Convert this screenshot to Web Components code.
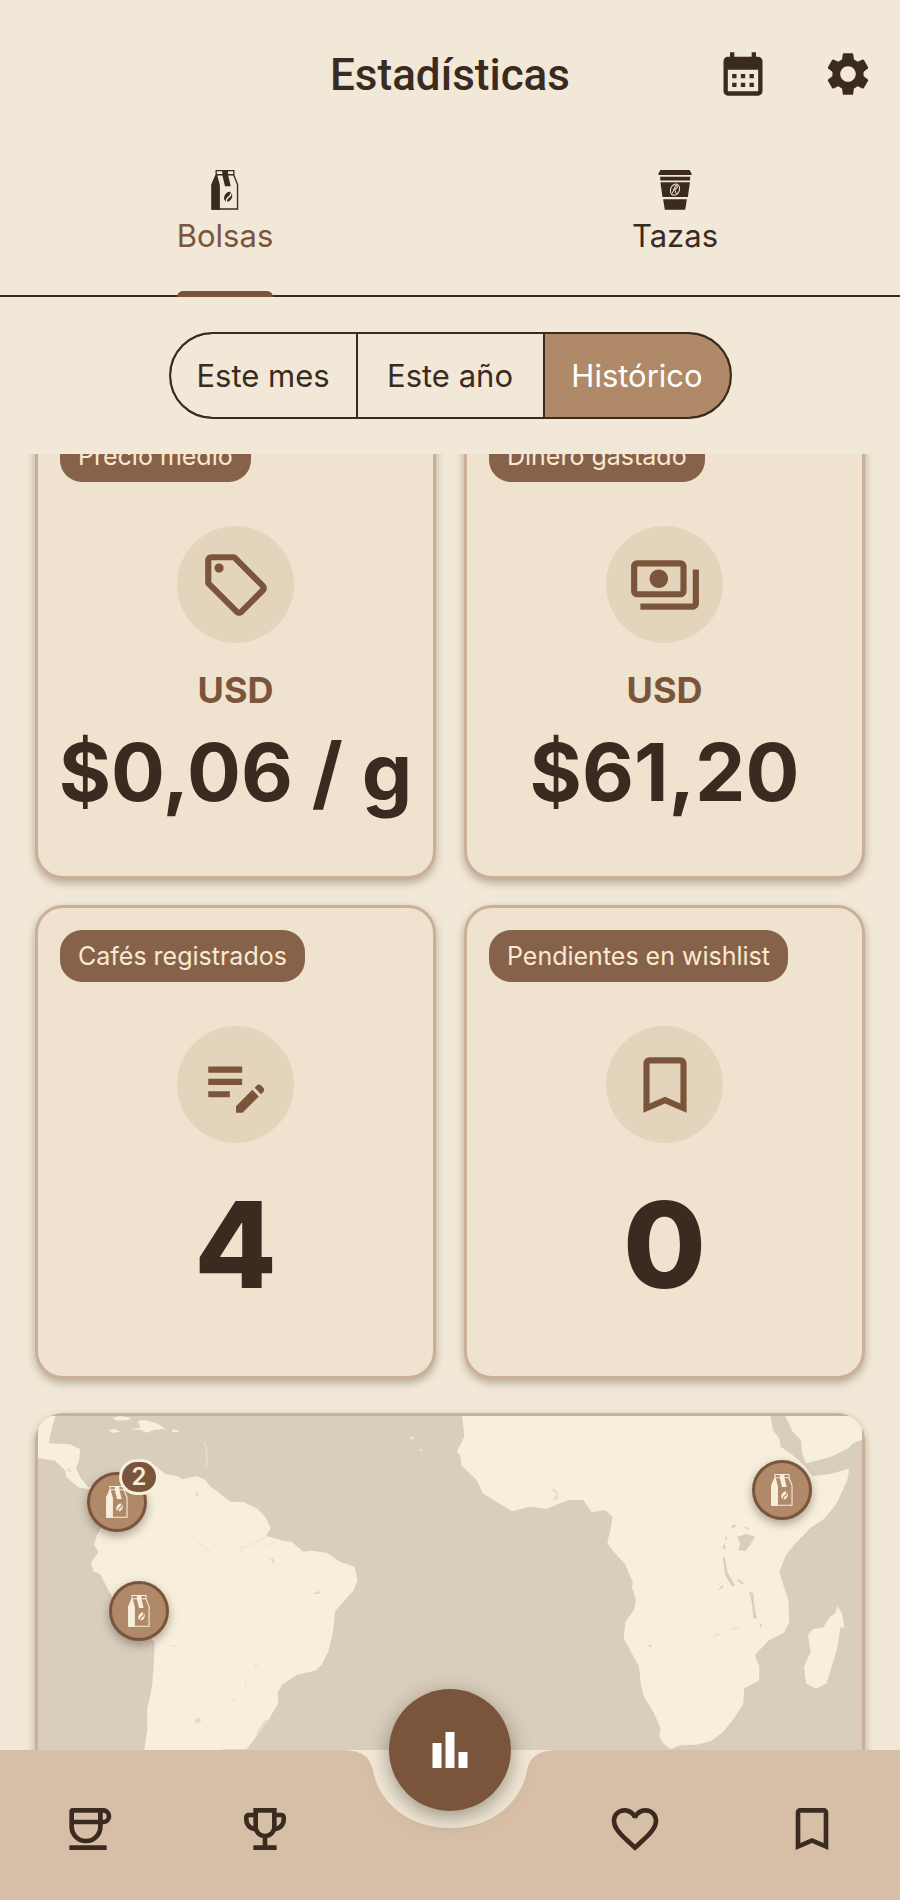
<!DOCTYPE html>
<html lang="es">
<head>
<meta charset="utf-8">
<meta name="viewport" content="width=device-width, initial-scale=1">
<title>Estadísticas</title>
<style>
    :root {
        --bg: #f2e8d7;
        --ink: #3b2a1f;
        --brown: #7b553b;
        --tan: #b08a68;
        --tag: #87624a;
        --card: #efe2cf;
        --line: #cbb099;
        --cream: #f7eedc;
        --sea: #d9cdbc;
        --nav: #d7bfa7;
    }

    body {
        margin: 0;
        background: var(--bg);
        color: var(--ink);
        font-family: Inter, "Liberation Sans", sans-serif;
    }
</style>
</head>
<body>
<stats-app></stats-app>

<script>
    const ICONS = {
        calendar: ["0 0 24 24", `<path d="M19 4h-1V2h-2v2H8V2H6v2H5c-1.11 0-1.99.9-1.99 2L3 20c0 1.1.89 2 2 2h14c1.1 0 2-.9 2-2V6c0-1.1-.9-2-2-2zm0 16H5V10h14v10zM9 14H7v-2h2v2zm4 0h-2v-2h2v2zm4 0h-2v-2h2v2zm-8 4H7v-2h2v2zm4 0h-2v-2h2v2zm4 0h-2v-2h2v2z"/>`],
        settings: ["0 0 24 24", `<path d="M19.14 12.94c.04-.3.06-.61.06-.94 0-.32-.02-.64-.07-.94l2.03-1.58c.18-.14.23-.41.12-.61l-1.92-3.32c-.12-.22-.37-.29-.59-.22l-2.39.96c-.5-.38-1.03-.7-1.62-.94l-.36-2.54c-.04-.24-.24-.41-.48-.41h-3.84c-.24 0-.43.17-.47.41l-.36 2.54c-.59.24-1.13.57-1.62.94l-2.39-.96c-.22-.08-.47 0-.59.22L2.74 8.87c-.12.21-.08.47.12.61l2.03 1.58c-.05.3-.09.63-.09.94s.02.64.07.94l-2.03 1.58c-.18.14-.23.41-.12.61l1.92 3.32c.12.22.37.29.59.22l2.39-.96c.5.38 1.03.7 1.62.94l.36 2.54c.05.24.24.41.48.41h3.84c.24 0 .44-.17.47-.41l.36-2.54c.59-.24 1.13-.56 1.62-.94l2.39.96c.22.08.47 0 .59-.22l1.92-3.32c.12-.22.07-.47-.12-.61l-2.01-1.58zM12 15.6c-1.98 0-3.6-1.62-3.6-3.6s1.62-3.6 3.6-3.6 3.6 1.62 3.6 3.6-1.62 3.6-3.6 3.6z"/>`],
        bag: ["0 0 80 118", `
            <path d="M14 2H66V15L77 43V115H2V43L14 15ZM12 14H68" fill="none" stroke="currentColor" stroke-width="4"/>
            <path d="M12 15L0 43V117H25V45L17 15Z"/>
            <path d="M32 0H49V15L57 48H40L32 15Z"/>
            <path d="M57 65C47 62 38 72 37 84C38 89 40 91 42 92C43 83 46 80 50 78C53 76 55 71 57 65Z"/>
            <path d="M60 67C63 75 61 85 55 90C52 93 48 94 46 93C46 87 49 83 53 81C57 79 59 74 60 67Z"/>`],
        cup: ["0 0 98 118", `
            <path d="M6 0H92L98 11V15H0V11ZM5 20H94L93 31H6ZM6 36H93L87 80H12ZM14 86H84L79 117H19Z"/>
            <g fill="none" stroke="#f2e8d7" stroke-width="3">
                <ellipse cx="49" cy="58" rx="13" ry="17" transform="rotate(22 49 58)"/>
                <path d="M41 69L51 46C60 47 55 56 47 57C52 60 48 67 54 71"/>
            </g>`],
        sell: ["0 0 24 24", `<path d="M21.41 11.58l-9-9C12.05 2.22 11.55 2 11 2H4c-1.1 0-2 .9-2 2v7c0 .55.22 1.05.59 1.42l9 9c.36.36.86.58 1.41.58s1.05-.22 1.41-.59l7-7c.37-.36.59-.86.59-1.41s-.23-1.06-.59-1.42zM13 20.01L4 11V4h7v-.01l9 9-7 7.02z"/><circle cx="6.5" cy="6.5" r="1.5"/>`],
        payments: ["0 0 24 24", `<path d="M19 14V6c0-1.1-.9-2-2-2H3c-1.1 0-2 .9-2 2v8c0 1.1.9 2 2 2h14c1.1 0 2-.9 2-2zm-2 0H3V6h14v8zm-7-7c-1.66 0-3 1.34-3 3s1.34 3 3 3 3-1.34 3-3-1.34-3-3-3zm13 0v11c0 1.1-.9 2-2 2H4v-2h17V7h2z"/>`],
        note: ["0 0 24 24", `<path d="M3 10h11v2H3v-2zm0-2h11V6H3v2zm0 8h7v-2H3v2zm15.01-3.13l.71-.71c.39-.39 1.02-.39 1.41 0l.71.71c.39.39.39 1.02 0 1.41l-.71.71-2.12-2.12zm-.71.71l-5.3 5.3V21h2.12l5.3-5.3-2.12-2.12z"/>`],
        bookmark: ["0 0 24 24", `<path d="M17 3H7c-1.1 0-1.99.9-1.99 2L5 21l7-3 7 3V5c0-1.1-.9-2-2-2zm0 15l-5-2.18L7 18V5h10v13z"/>`],
        coffee: ["0 0 24 24", `<path d="M5 11V4.5Q5 4 5.5 4H18.5A2.5 2.5 0 0 1 18.5 9H5M17.3 4V11A6.15 6.15 0 0 1 5 11" fill="none" stroke="currentColor" stroke-width="2"/><path d="M4 19h16v2H4z"/>`],
        trophy: ["0 0 24 24", `<path d="M19 5h-2V3H7v2H5c-1.1 0-2 .9-2 2v1c0 2.55 1.92 4.63 4.39 4.94.63 1.5 1.98 2.63 3.61 2.96V19H7v2h10v-2h-4v-3.1c1.63-.33 2.98-1.46 3.61-2.96C19.08 12.63 21 10.55 21 8V7c0-1.1-.9-2-2-2zM5 8V7h2v3.82C5.84 10.4 5 9.3 5 8zm7 6c-1.65 0-3-1.35-3-3V5h6v6c0 1.65-1.35 3-3 3zm7-6c0 1.3-.84 2.4-2 2.82V7h2v1z"/>`],
        heart: ["0 0 24 24", `<path d="M16.5 3c-1.74 0-3.41.81-4.5 2.09C10.91 3.81 9.24 3 7.5 3 4.42 3 2 5.42 2 8.5c0 3.78 3.4 6.86 8.55 11.54L12 21.35l1.45-1.32C18.6 15.36 22 12.28 22 8.5 22 5.42 19.58 3 16.5 3zm-4.4 15.55l-.1.1-.1-.1C7.14 14.24 4 11.39 4 8.5 4 6.5 5.5 5 7.5 5c1.54 0 3.04.99 3.57 2.36h1.87C13.46 5.99 14.96 5 16.5 5c2 0 3.5 1.5 3.5 3.5 0 2.89-3.14 5.74-7.9 10.05z"/>`],
        chart: ["0 0 35 36", `<path d="M0 11h9v25H0zM13 0h9v36h-9zM26 20h9v16h-9z"/>`]
    };

    class AppIcon extends HTMLElement {
        connectedCallback() {
            const [box, shapes] = ICONS[this.getAttribute("name")];
            this.attachShadow({mode: "open"}).innerHTML = `
                <style>
                    :host { display: block; width: 52px; height: 52px; }
                    svg { display: block; width: 100%; height: 100%; }
                </style>
                <svg viewBox="${box}" fill="currentColor" aria-hidden="true">${shapes}</svg>
            `;
        }
    }

    class AppHeader extends HTMLElement {
        connectedCallback() {
            this.attachShadow({mode: "open"}).innerHTML = `
                <style>
                    :host { display: block; }
                    header {
                        display: grid;
                        grid-template-columns: 1fr auto 1fr;
                        align-items: center;
                        height: 148px;
                    }
                    h1 {
                        grid-column: 2;
                        margin: 0;
                        padding-top: 2px;
                        font: 500 44px/52px Roboto, "Liberation Sans", sans-serif;
                    }
                    .actions { display: flex; justify-content: flex-end; }
                    button {
                        display: grid;
                        place-items: center;
                        width: 105px;
                        height: 105px;
                        padding: 0;
                        border: 0;
                        background: none;
                        color: inherit;
                    }
                </style>
                <header>
                    <h1><slot></slot></h1>
                    <div class="actions">
                        <button type="button" aria-label="Calendario"><app-icon name="calendar"></app-icon></button>
                        <button type="button" aria-label="Ajustes"><app-icon name="settings"></app-icon></button>
                    </div>
                </header>
            `;
        }
    }

    class TabItem extends HTMLElement {
        connectedCallback() {
            const active = this.hasAttribute("active");
            this.attachShadow({mode: "open"}).innerHTML = `
                <style>
                    :host { display: flex; flex: 1; justify-content: center; }
                    button {
                        display: flex;
                        flex-direction: column;
                        align-items: center;
                        gap: 8px;
                        padding: 22px 0 0;
                        border: 0;
                        background: none;
                        color: var(--ink);
                        font: 400 31px/36px Inter, "Liberation Sans", sans-serif;
                    }
                    app-icon { height: 40px; }
                    :host([active]) .label { color: var(--brown); }
                    :host([active]) button::after {
                        content: "";
                        width: 100%;
                        height: 6px;
                        margin-top: auto;
                        border-radius: 6px 6px 0 0;
                        background: var(--brown);
                    }
                </style>
                <button type="button" role="tab" aria-selected="${active}">
                    <app-icon name="${this.getAttribute("icon")}"></app-icon>
                    <span class="label"><slot></slot></span>
                </button>
            `;
        }
    }

    class TabBar extends HTMLElement {
        connectedCallback() {
            this.attachShadow({mode: "open"}).innerHTML = `
                <style>
                    :host { display: block; }
                    div {
                        display: flex;
                        height: 149px;
                        background: linear-gradient(var(--ink), var(--ink)) bottom / 100% 2px no-repeat;
                    }
                </style>
                <div role="tablist"><slot></slot></div>
            `;
        }
    }

    class PeriodFilter extends HTMLElement {
        connectedCallback() {
            const options = this.getAttribute("options").split(",");
            const selected = this.getAttribute("selected");
            this.attachShadow({mode: "open"}).innerHTML = `
                <style>
                    :host { display: flex; justify-content: center; padding: 35px 16px; }
                    .group {
                        display: grid;
                        grid-template-columns: repeat(3, 185px);
                        gap: 2px;
                        height: 83px;
                        border: 2px solid var(--ink);
                        border-radius: 44px;
                        background: var(--ink);
                        overflow: hidden;
                    }
                    button {
                        padding: 0;
                        border: 0;
                        background: var(--bg);
                        color: var(--ink);
                        font: 400 31px/36px Inter, "Liberation Sans", sans-serif;
                    }
                    button:first-child { border-radius: 42px 0 0 42px; }
                    button:last-child { border-radius: 0 42px 42px 0; }
                    button[aria-pressed="true"] { background: var(--tan); color: #fff; }
                </style>
                <div class="group" role="group" aria-label="Periodo">
                    ${options.map((o) => `<button type="button" aria-pressed="${o === selected}">${o}</button>`).join("")}
                </div>
            `;

            this.shadowRoot.addEventListener("click", (e) => {
                if (!e.target.matches("button")) return;

                this.shadowRoot.querySelectorAll("button").forEach((b) => {
                    b.setAttribute("aria-pressed", b === e.target);
                });
            });
        }
    }

    class StatCard extends HTMLElement {
        connectedCallback() {
            const unit = this.getAttribute("unit");
            this.attachShadow({mode: "open"}).innerHTML = `
                <style>
                    :host {
                        display: flex;
                        flex-direction: column;
                        align-items: center;
                        box-sizing: border-box;
                        min-height: 474px;
                        padding: 22px 20px;
                        border: 3px solid var(--line);
                        border-radius: 28px;
                        background: var(--card);
                        box-shadow: 0 4px 8px rgba(90, 75, 50, .4);
                    }
                    .tag {
                        align-self: flex-start;
                        margin: 0 2px;
                        padding: 10px 18px;
                        border-radius: 22px;
                        background: var(--tag);
                        color: #fbe9cf;
                        font: 400 25px/32px Inter, "Liberation Sans", sans-serif;
                    }
                    .badge {
                        display: grid;
                        place-items: center;
                        width: 117px;
                        height: 117px;
                        margin-top: 44px;
                        border-radius: 50%;
                        background: #e4d4bb;
                        color: var(--brown);
                    }
                    app-icon { width: 74px; height: 74px; }
                    .body {
                        display: flex;
                        flex: 1;
                        flex-direction: column;
                        align-items: center;
                        justify-content: center;
                        gap: 12px;
                        padding-bottom: 8px;
                        white-space: nowrap;
                    }
                    .unit { color: var(--brown); font-size: 36px; line-height: 40px; font-weight: 700; }
                    .value { font-size: 120px; line-height: 120px; font-weight: 800; }
                    :host([unit]) .value { font-size: 80px; line-height: 100px; font-weight: 700; }
                    :host([unit]) .body { padding-bottom: 6px; }
                </style>
                <span class="tag">${this.getAttribute("label")}</span>
                <div class="badge"><app-icon name="${this.getAttribute("icon")}"></app-icon></div>
                <div class="body">
                    ${unit ? `<span class="unit">${unit}</span>` : ""}
                    <span class="value"><slot></slot></span>
                </div>
            `;
        }
    }

    class MapPin extends HTMLElement {
        connectedCallback() {
            const count = this.getAttribute("count");
            this.attachShadow({mode: "open"}).innerHTML = `
                <style>
                    :host { display: block; width: 60px; height: 60px; transform: translate(-50%, -50%); }
                    button {
                        display: grid;
                        place-items: center;
                        width: 60px;
                        height: 60px;
                        padding: 0;
                        border: 3px solid var(--brown);
                        border-radius: 50%;
                        background: var(--tan);
                        color: var(--cream);
                        box-shadow: 0 4px 10px rgba(60, 50, 35, .4);
                    }
                    app-icon { width: 32px; height: 32px; }
                    .count {
                        position: absolute;
                        top: -13px;
                        right: -12px;
                        box-sizing: border-box;
                        width: 40px;
                        height: 36px;
                        border: 3px solid var(--cream);
                        border-radius: 18px;
                        background: var(--brown);
                        color: var(--cream);
                        font: 600 24px/30px Inter, "Liberation Sans", sans-serif;
                        text-align: center;
                    }
                </style>
                <button type="button" aria-label="Origen"><app-icon name="bag"></app-icon></button>
                ${count ? `<span class="count">${count}</span>` : ""}
            `;
        }
    }

    class WorldMap extends HTMLElement {
        connectedCallback() {
            this.attachShadow({mode: "open"}).innerHTML = `
                <style>
                    /* the frame is padding, so the map runs square into the rounded corners */
                    :host {
                        display: block;
                        position: relative;
                        height: 500px;
                        padding: 3px;
                        border-radius: 28px;
                        background: var(--line);
                        box-shadow: 0 4px 8px rgba(90, 75, 50, .4);
                        overflow: hidden;
                    }
                    svg { display: block; width: 100%; height: 100%; background: var(--sea); }
                    ::slotted(map-pin) { position: absolute; }
                </style>
                <svg viewBox="0 0 2472 1500" preserveAspectRatio="xMidYMin slice" fill="#f7eedc" stroke-linejoin="round" aria-hidden="true">
                    <!-- americas -->
                    <g transform="translate(-54 -48)">
                        <path d="M50 40H110L98 75L86 130L150 133L180 148L178 180L168 205L182 235L205 262L240 250L300 225L410 200L436 222L470 228L488 238L530 228L556 240L570 258L605 285L632 305L670 306L712 326L736 350L752 385L738 408L765 415L790 422L815 425L850 455L875 452L920 458L960 485L1003 500L1013 540L1000 572L975 600L945 634L940 690L925 755L905 795L885 812L830 825L785 855L773 880L775 910L745 960L705 1015L680 1048H606L650 1075L640 1110L600 1180L560 1280L500 1400L420 1480L372 1300L360 1150L373 1045L382 990L381 930L396 860L401 800L404 725L355 690L300 630L268 575L240 522L220 514L213 488L236 456L222 435L232 402L262 355L250 300L205 268L175 262L138 230L136 212L105 182L54 174Z"/>
                        <path d="M278 54L300 48L334 54L325 60L290 62ZM265 90L285 87L300 95L278 99ZM332 88L360 84L355 62L375 60L410 70L436 86L400 90L380 98L362 90ZM455 88L480 92L470 97L456 95ZM1170 108L1182 114L1176 120ZM1198 146L1208 150L1202 154ZM1310 154L1322 146V162Z"/>
                        <path d="M552 125Q566 160 558 205" fill="none" stroke="#e6dccb" stroke-width="5"/>
                        <path d="M740 408Q710 430 660 445M770 422L740 440M578 432L586 440M520 415L575 460M660 455L668 448" fill="none" stroke="#f0e7d5" stroke-width="5"/>
                        <path d="M524 282l8-6 4 8-6 8zM750 478l8-3 7 12-6 3zM526 958l12-5 6 8-8 10-12-4zM875 582l30-12-8 12zM702 798l14-6-10 10zM672 860l8-15-4 15zM636 904l10-12-4 13zM454 736l12 0-6 6zM142 203l8 4 4 10-10-4zM735 960l8 0-28 48-6-8z" fill="#e4dac8"/>
                    </g>
                    <!-- africa -->
                    <g transform="translate(1206 -48)">
                        <path d="M65 40H990L998 90L1018 115L1022 140L1058 165L1095 198L1118 228L1170 222L1228 206L1222 240L1190 310L1155 355L1110 385L1065 432L1038 465L1018 515L1030 555L1045 600L1048 665L1032 698L985 722L945 765L958 800L957 842L913 865L910 912L880 958L850 995L815 1022L770 1034L720 1036L692 1048L668 1028L658 1010L662 985L640 935L612 890L602 850L597 800L570 750L551 715L556 665L582 630L588 600L576 565L578 545L555 492L512 445L502 428L512 385L518 350L495 330L455 337L430 300H385L320 326L270 320L216 334L180 312L128 280L110 240L64 196L60 165L50 155L73 110Z"/>
                        <path d="M1030 40H1290V110L1240 130L1225 145L1170 172L1098 190L1086 160L1083 120L1058 95L1046 68Z"/>
                        <path d="M1192 618L1206 640L1213 685L1202 680L1190 750L1172 810L1160 850L1128 866L1098 850L1092 800L1112 755L1104 705L1118 688L1150 682L1170 650L1186 640Z"/>
                        <g fill="#d9cdbc">
                            <path d="M892 410L918 402L945 410L932 432L916 454L895 450L900 430Z"/>
                            <path d="M848 468L855 475L862 515L884 555L876 560L856 525ZM928 575L940 580L942 610L950 655L940 655L936 610ZM888 538L900 540L915 554L905 552ZM870 388L880 372L890 378ZM848 448L852 430L858 445ZM832 572L848 555L850 562ZM622 735L636 735L632 742ZM905 380L928 384L925 388ZM855 412L862 410L858 422ZM958 670L966 674L962 684Z"/>
                            <path d="M330 264L345 268L356 280L352 300L340 300L348 282ZM816 718L828 700L845 702L826 708ZM875 684L902 682L880 690Z" fill="#e8decc"/>
                        </g>
                    </g>
                </svg>
                <slot></slot>
            `;
        }
    }

    class BottomNav extends HTMLElement {
        connectedCallback() {
            this.attachShadow({mode: "open"}).innerHTML = `
                <style>
                    :host { display: block; position: relative; }
                    nav {
                        display: grid;
                        grid-template-columns: 1fr 1fr 194px 1fr 1fr;
                        justify-items: center;
                        height: 150px;
                        background: var(--nav);
                    }
                    .link { display: block; margin-top: 51px; height: 56px; color: var(--ink); }
                    .link app-icon { width: 56px; height: 56px; }
                    .center { position: relative; width: 100%; }
                    .notch { position: absolute; top: 0; left: 50%; width: 212px; height: 80px; margin-left: -106px; }
                    .fab {
                        position: absolute;
                        top: -61px;
                        left: 50%;
                        display: grid;
                        place-items: center;
                        width: 122px;
                        height: 122px;
                        margin-left: -61px;
                        border-radius: 50%;
                        background: var(--brown);
                        color: #fff;
                        box-shadow: 0 6px 20px rgba(70, 65, 45, .5);
                    }
                    .fab app-icon { width: 36px; height: 36px; }
                </style>
                <nav aria-label="Principal">
                    <a class="link" href="#cafes" aria-label="Cafés"><app-icon name="coffee"></app-icon></a>
                    <a class="link" href="#logros" aria-label="Logros"><app-icon name="trophy"></app-icon></a>
                    <div class="center">
                        <svg class="notch" viewBox="0 0 212 80" fill="#f2e8d7" aria-hidden="true">
                            <path d="M0 0C20 1 26 8 29 20C35 54 66 78 106 78S177 54 183 20C186 8 192 1 212 0Z"/>
                        </svg>
                        <a class="fab" href="#estadisticas" aria-label="Estadísticas" aria-current="page"><app-icon name="chart"></app-icon></a>
                    </div>
                    <a class="link" href="#favoritos" aria-label="Favoritos"><app-icon name="heart"></app-icon></a>
                    <a class="link" href="#wishlist" aria-label="Wishlist"><app-icon name="bookmark"></app-icon></a>
                </nav>
            `;
        }
    }

    class StatsApp extends HTMLElement {
        connectedCallback() {
            this.attachShadow({mode: "open"}).innerHTML = `
                <style>
                    :host { display: flex; flex-direction: column; height: 100vh; }
                    main {
                        flex: 1;
                        min-height: 0;
                        padding: 0 35px;
                        overflow-y: auto;
                        scrollbar-width: none;
                    }
                    .cards {
                        display: grid;
                        grid-template-columns: 1fr 1fr;
                        gap: 26px 28px;
                        margin-bottom: 34px;
                    }
                    .bogota { left: 82px; top: 89px; }
                    .lima { left: 104px; top: 198px; }
                    .etiopia { left: 90%; top: 77px; }
                </style>
                <app-header>Estadísticas</app-header>
                <tab-bar>
                    <tab-item icon="bag" active>Bolsas</tab-item>
                    <tab-item icon="cup">Tazas</tab-item>
                </tab-bar>
                <period-filter options="Este mes,Este año,Histórico" selected="Histórico"></period-filter>
                <main>
                    <section class="cards">
                        <stat-card label="Precio medio" icon="sell" unit="USD">$0,06 / g</stat-card>
                        <stat-card label="Dinero gastado" icon="payments" unit="USD">$61,20</stat-card>
                        <stat-card label="Cafés registrados" icon="note">4</stat-card>
                        <stat-card label="Pendientes en wishlist" icon="bookmark">0</stat-card>
                    </section>
                    <world-map>
                        <map-pin class="bogota" count="2"></map-pin>
                        <map-pin class="lima"></map-pin>
                        <map-pin class="etiopia"></map-pin>
                    </world-map>
                </main>
                <bottom-nav></bottom-nav>
            `;

            // the list opens a little way down
            this.shadowRoot.querySelector("main").scrollTop = 49;
        }
    }

    customElements.define("app-icon", AppIcon);
    customElements.define("app-header", AppHeader);
    customElements.define("tab-item", TabItem);
    customElements.define("tab-bar", TabBar);
    customElements.define("period-filter", PeriodFilter);
    customElements.define("stat-card", StatCard);
    customElements.define("map-pin", MapPin);
    customElements.define("world-map", WorldMap);
    customElements.define("bottom-nav", BottomNav);
    customElements.define("stats-app", StatsApp);
</script>
</body>
</html>
